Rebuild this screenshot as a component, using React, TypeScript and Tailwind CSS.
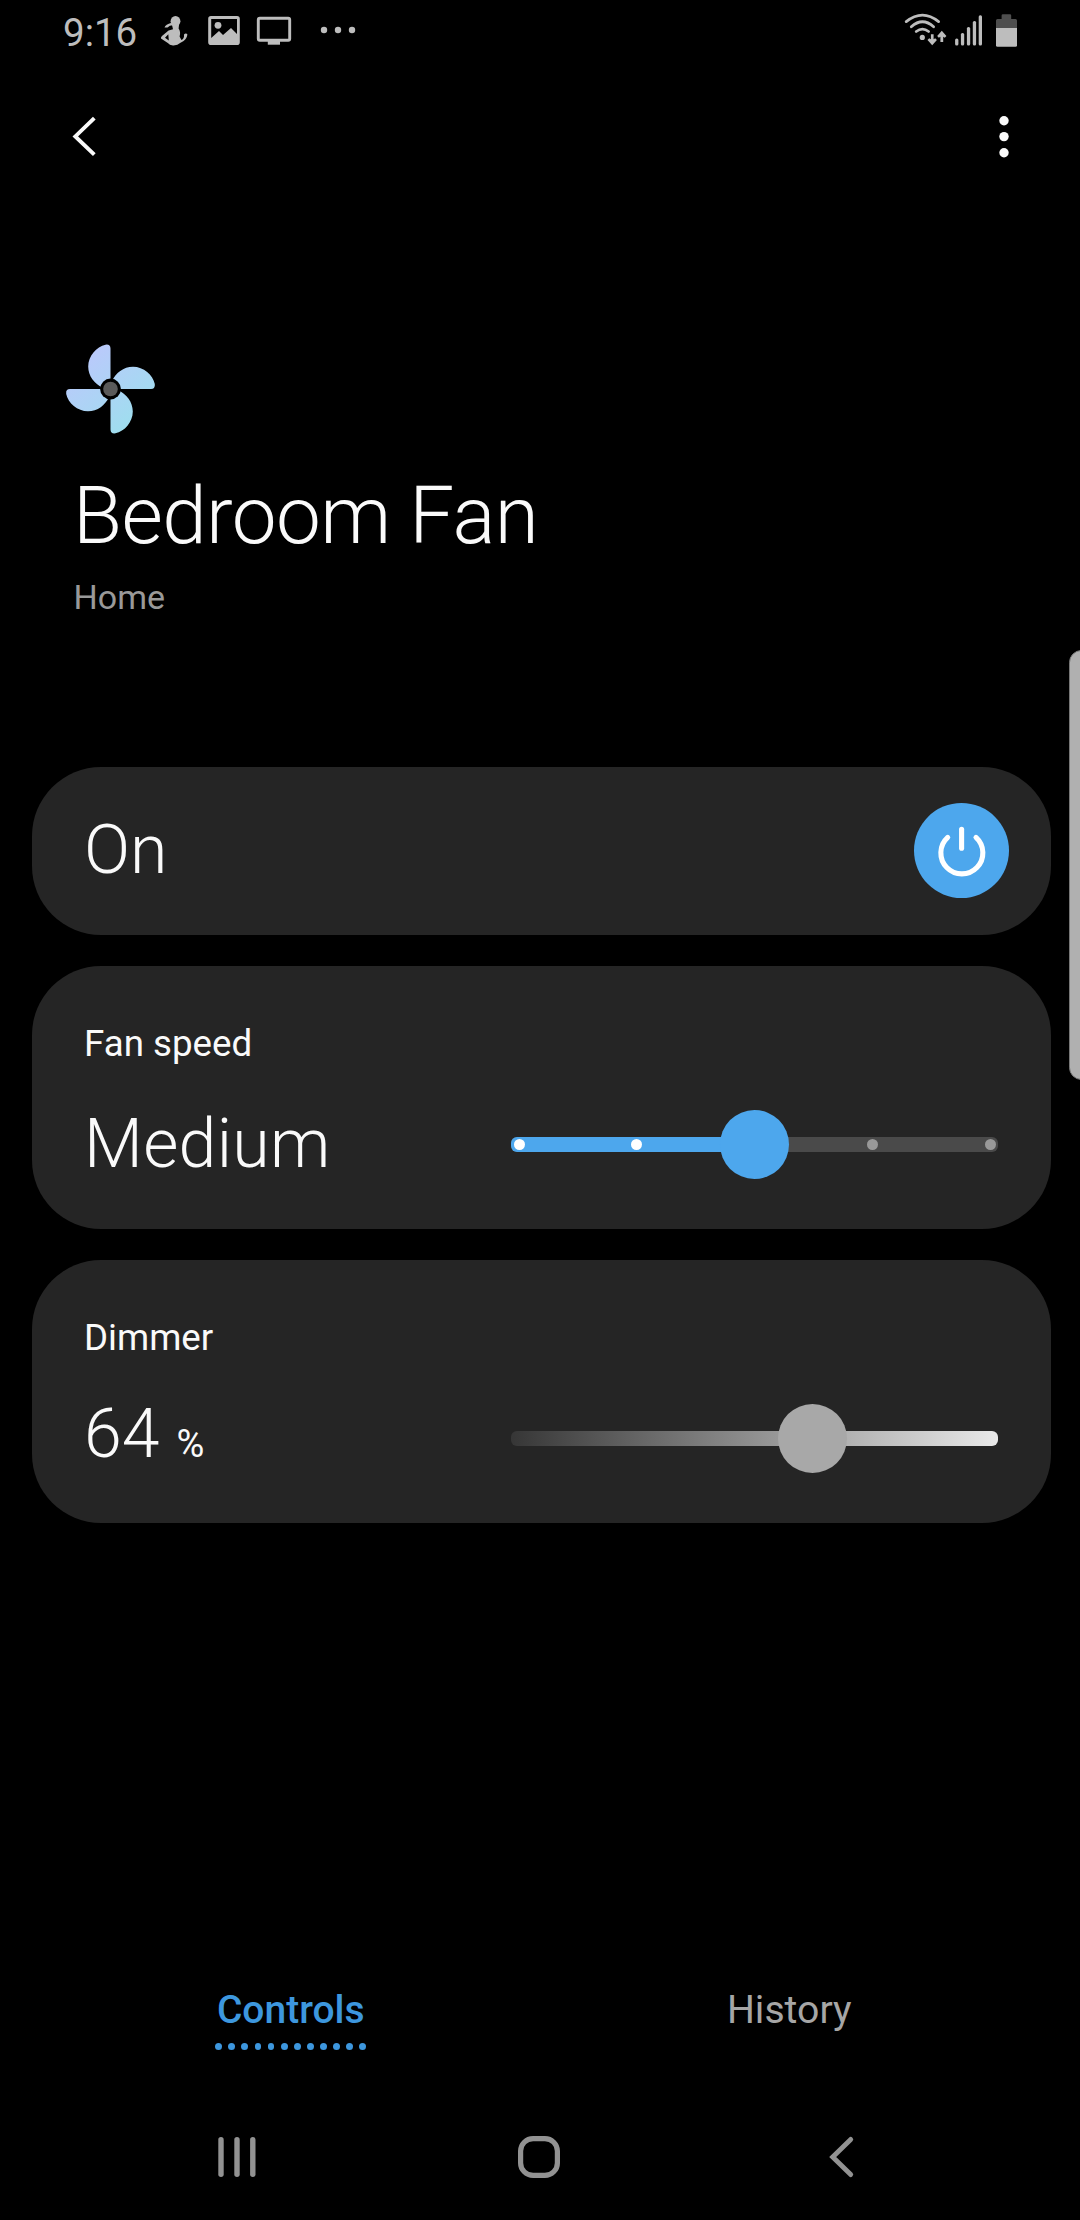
import type { ReactNode } from "react";

const BLADE =
  "M0 0V-40.5Q0 -45 -5 -44.3C-14 -42.5 -22.3 -33 -22.3 -22.5C-22.3 -13 -16 -5 -8 -1.5Z";

function StatusBar() {
  return (
    <header className="flex h-[64px] items-start justify-between pl-[63px]">
      <div className="flex items-start text-[#bdbdbd]">
        <span className="w-[90px] pt-[7px] text-[38.5px] leading-[52px]">9:16</span>
        <svg width="220" height="64" viewBox="153 0 220 64" fill="#bdbdbd">
          <ellipse cx="175.5" cy="21.3" rx="4.9" ry="5.4" />
          <path d="M172 25H179L178.6 28.5Q181 32 179.6 36.5L181.4 40C183.5 39 184.3 37.5 184 34.5Q185.5 32.8 187.3 34C187.4 38 184.5 41 180.5 42.8Q177.5 45.6 173 45.4Q169.5 45.3 167.8 43L161 38.6Q160.6 37 162 36L168.6 30.4L173 29.2ZM168.3 34.3L165 37.8L168.8 40.6Z" fillRule="evenodd" />
          <path d="M164.5 27.5Q165.5 24.6 171.5 22.8L172.8 25.2Q169.6 25.2 167.5 27.6Z" />
          <path fillRule="evenodd" d="M211 16H237Q239.8 16 239.8 18.8V42.2Q239.8 45 237 45H211Q208.2 45 208.2 42.2V18.8Q208.2 16 211 16ZM211.2 19V38L219 31L223 35L231 28L237 34V19Z" />
          <circle cx="218" cy="25.3" r="3.4" />
          <rect x="258.3" y="18.3" width="31.4" height="22" rx="1.5" fill="none" stroke="#bdbdbd" strokeWidth="2.9" />
          <rect x="267.8" y="41" width="12.2" height="3.7" />
          <circle cx="324" cy="30" r="3.2" />
          <circle cx="338" cy="30" r="3.2" />
          <circle cx="352" cy="30" r="3.2" />
        </svg>
      </div>
      <svg width="180" height="64" viewBox="900 0 180 64" fill="#bdbdbd">
        <g fill="none" stroke="#bdbdbd" strokeWidth="2.8" strokeLinecap="round">
          <path d="M906.2 21.6Q922.5 8.6 938.6 21.6" />
          <path d="M911.3 26.7Q922.5 16.8 933.6 26.7" />
          <path d="M916.2 31.5Q922.5 26.7 928.6 31.5" />
        </g>
        <circle cx="922.3" cy="37.4" r="2.6" />
        <path d="M930.9 34.2H933.6V39.3L935.2 38.2L936.9 40L932.2 45.3L927.5 40L929.2 38.2L930.9 39.3Z" />
        <path d="M940.4 42V36.8L938.8 37.8L937.2 36L941.8 30.8L946.4 36L944.8 37.8L943.2 36.8V42Z" />
        <rect x="955.1" y="38.5" width="3.3" height="6.9" rx="1.5" />
        <rect x="960.9" y="33" width="3.3" height="12.4" rx="1.5" />
        <rect x="966.9" y="27" width="3.3" height="18.4" rx="1.5" />
        <rect x="972.8" y="21" width="3.3" height="24.4" rx="1.5" />
        <rect x="978.7" y="15.3" width="3.3" height="30.1" rx="1.5" />
        <path fill="#4e4e4e" d="M1001.6 19V15.5Q1001.6 14.3 1003 14.3H1010Q1011.2 14.3 1011.2 15.5V19H1015.5Q1017 19 1017 20.5V28H996V20.5Q996 19 997.5 19Z" />
        <path d="M996 28H1017V45.2Q1017 46.7 1015.5 46.7H997.5Q996 46.7 996 45.2Z" />
      </svg>
    </header>
  );
}

function AppBar() {
  return (
    <div className="flex h-[146px] items-center justify-between pr-[66px] pl-[64px]">
      <svg width="40" height="60" viewBox="64 107 40 60">
        <path d="M94.3 118.2L75.3 136.4L94.3 154.6" fill="none" stroke="#fafafa" strokeWidth="3.9" />
      </svg>
      <svg width="20" height="60" viewBox="993.3 107 20 60" fill="#fafafa">
        <circle cx="1003.3" cy="120.7" r="4.7" />
        <circle cx="1003.3" cy="136.6" r="4.7" />
        <circle cx="1003.3" cy="152.8" r="4.7" />
      </svg>
    </div>
  );
}

function FanIcon() {
  return (
    <svg className="ml-[60px]" width="100" height="100" viewBox="-50.5 -49 100 100">
      <defs>
        <linearGradient id="fan-fill" gradientUnits="userSpaceOnUse" x1="-30" y1="-36" x2="28" y2="36">
          <stop offset="0" stopColor="#bcc8fc" />
          <stop offset="1" stopColor="#9ddfee" />
        </linearGradient>
        <clipPath id="fan-blades">
          <path d={BLADE} />
          <path d={BLADE} transform="rotate(90)" />
          <path d={BLADE} transform="rotate(180)" />
          <path d={BLADE} transform="rotate(270)" />
        </clipPath>
      </defs>
      <rect x="-50" y="-50" width="100" height="100" fill="url(#fan-fill)" clipPath="url(#fan-blades)" />
      <circle r="10.4" fill="#000" />
      <circle r="7.3" fill="#5a5a5a" />
    </svg>
  );
}

function ControlCard({ title, value, slider }: { title: string; value: ReactNode; slider: ReactNode }) {
  return (
    <section className="h-[263px] rounded-[69px] bg-[#252525] pt-[56px] pr-[53px] pl-[52px]">
      <h2 className="text-[36.7px] leading-[44px]">{title}</h2>
      <div className="mt-[38px] flex h-[81px] items-center justify-between">
        {value}
        {slider}
      </div>
    </section>
  );
}

function SpeedSlider() {
  return (
    <div className="relative flex h-[15px] w-[487px] items-center justify-between rounded-[6px] bg-[#4a4a4a] px-[2.5px]">
      <div className="absolute inset-y-0 left-0 w-1/2 rounded-l-[6px] bg-[#4da7ed]" />
      <i className="relative size-[11px] rounded-full bg-white" />
      <i className="relative size-[11px] rounded-full bg-white" />
      <i className="relative -mx-[29px] -my-[27px] size-[69px] shrink-0 rounded-full bg-[#4da7ed]" />
      <i className="relative size-[11px] rounded-full bg-[#999999]" />
      <i className="relative size-[11px] rounded-full bg-[#999999]" />
    </div>
  );
}

function DimmerSlider() {
  return (
    <div className="relative h-[15px] w-[487px] rounded-[6px] bg-linear-to-r/srgb from-[#363636] to-[#e9e9e9]">
      <i className="absolute -top-[27px] left-[266.5px] size-[69px] rounded-full bg-[#a8a8a8]" />
    </div>
  );
}

function Tabs() {
  return (
    <nav className="grid h-[108px] grid-cols-2 px-[41.5px] text-[39px] leading-[48px]">
      <div className="flex flex-col items-center font-medium text-[#3d97de]">
        <span>Controls</span>
        <div className="mt-[9px] flex w-[151px] justify-between">
          {Array.from({ length: 12 }, (_, i) => (
            <i key={i} className="size-[6.8px] rounded-full bg-[#3d97de]" />
          ))}
        </div>
      </div>
      <div className="text-center text-[39.2px] text-[#a6a6a6]">History</div>
    </nav>
  );
}

function NavBar() {
  return (
    <div className="flex h-[126px] items-center justify-between px-[213px]">
      <svg width="48" height="60" viewBox="213 2127 48 60" fill="#929292">
        <rect x="218.3" y="2137" width="5.4" height="40" rx="2.7" />
        <rect x="234.3" y="2137" width="5.4" height="40" rx="2.7" />
        <rect x="250.1" y="2137" width="5.4" height="40" rx="2.7" />
      </svg>
      <svg width="60" height="60" viewBox="510 2127 60 60">
        <rect x="520.6" y="2138.6" width="36.8" height="36.8" rx="12.5" fill="none" stroke="#929292" strokeWidth="5.2" />
      </svg>
      <svg width="48" height="60" viewBox="819 2127 48 60">
        <path d="M850.7 2139.4L832.7 2157L850.7 2174.6" fill="none" stroke="#929292" strokeWidth="4.9" strokeLinecap="round" />
      </svg>
    </div>
  );
}

export default function App() {
  return (
    <div className="relative flex h-[2220px] w-[1080px] flex-col overflow-hidden bg-black font-[Roboto,sans-serif] text-[#fafafa]">
      <StatusBar />
      <AppBar />
      <div className="mt-[130px] flex flex-col">
        <FanIcon />
        <h1 className="mt-[28px] ml-[73px] text-[80px] leading-[96px] font-light tracking-[-0.6px]">Bedroom Fan</h1>
        <p className="mt-[13px] ml-[73.5px] text-[34px] leading-[40px] text-[#999999]">Home</p>
      </div>
      <main className="mt-[150px] mr-[29px] ml-[32px] flex flex-col gap-[31px]">
        <section className="flex h-[168px] items-center justify-between rounded-[69px] bg-[#252525] pr-[42px] pb-px pl-[52px]">
          <span className="pb-[2px] text-[68px] leading-[80px] font-light">On</span>
          <button className="size-[95px] rounded-full bg-[#4da7ed]" aria-label="Power">
            <svg width="95" height="95" viewBox="914 803 95 95" fill="none" stroke="#fff" strokeWidth="5.1" strokeLinecap="round">
              <path d="M961.6 829.2V848.2" />
              <path d="M947.7 837.4A21 21 0 1 0 976 837.4" />
            </svg>
          </button>
        </section>
        <ControlCard
          title="Fan speed"
          value={<span className="pb-[2px] text-[68px] leading-[80px] font-light tracking-[0.3px]">Medium</span>}
          slider={<SpeedSlider />}
        />
        <ControlCard
          title="Dimmer"
          value={
            <div className="flex items-baseline leading-[80px]">
              <span className="text-[68px] font-light">64</span>
              <span className="ml-[17px] text-[38px]">%</span>
            </div>
          }
          slider={<DimmerSlider />}
        />
      </main>
      <div className="mt-auto">
        <Tabs />
        <NavBar />
      </div>
      <div className="absolute top-[650px] -right-[14px] h-[430px] w-[25px] rounded-[13px] border border-[#777777] bg-[#b0b0b0]" />
    </div>
  );
}
